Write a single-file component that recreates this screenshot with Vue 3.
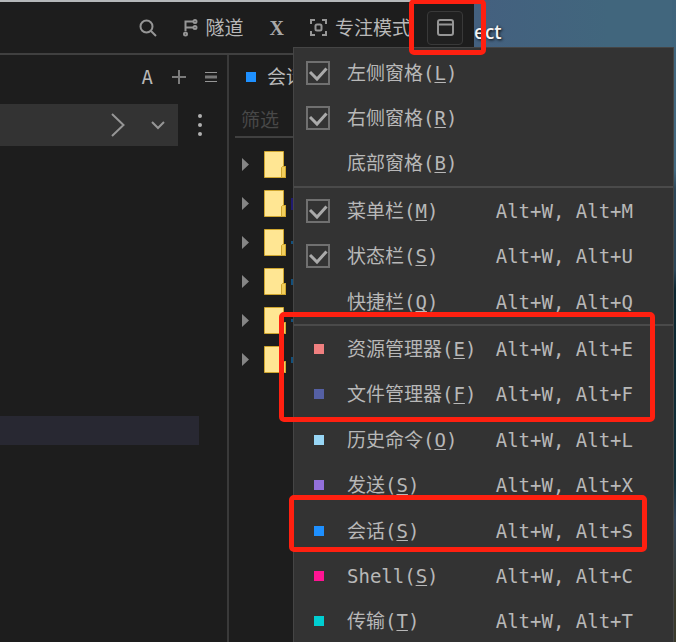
<script setup>
import { ref } from 'vue'

const groups = ref([
  [
    { label: '左侧窗格', key: 'L', checked: true },
    { label: '右侧窗格', key: 'R', checked: true },
    { label: '底部窗格', key: 'B' },
  ],
  [
    { label: '菜单栏', key: 'M', checked: true, shortcut: 'Alt+W, Alt+M' },
    { label: '状态栏', key: 'S', checked: true, shortcut: 'Alt+W, Alt+U' },
    { label: '快捷栏', key: 'Q', shortcut: 'Alt+W, Alt+Q' },
  ],
  [
    { label: '资源管理器', key: 'E', tone: 'coral', shortcut: 'Alt+W, Alt+E' },
    { label: '文件管理器', key: 'F', tone: 'indigo', shortcut: 'Alt+W, Alt+F' },
    { label: '历史命令', key: 'O', tone: 'sky', shortcut: 'Alt+W, Alt+L' },
    { label: '发送', key: 'S', tone: 'purple', shortcut: 'Alt+W, Alt+X' },
    { label: '会话', key: 'S', tone: 'blue', shortcut: 'Alt+W, Alt+S' },
    { label: 'Shell', key: 'S', tone: 'pink', shortcut: 'Alt+W, Alt+C' },
    { label: '传输', key: 'T', tone: 'teal', shortcut: 'Alt+W, Alt+T' },
  ],
])
const filter = ref('')
const command = ref('')
</script>

<template>
  <div class="desktop">
    <div class="window">
      <header class="toolbar">
        <button class="tool" aria-label="搜索">
          <svg width="18" height="18" viewBox="0 0 18 18"><circle cx="7.5" cy="7.5" r="6" /><path d="M12 12l5 5" /></svg>
        </button>
        <button class="tool">
          <svg width="15" height="18" viewBox="0 0 15 18"><path d="M2.5 12V2.5H11M2.5 8.500H11" /><circle cx="2.500" cy="15" r="1.500" /><circle cx="12" cy="2.500" r="1.500" /><circle cx="12" cy="8.500" r="1.500" /></svg>
          隧道
        </button>
        <button class="tool x-tool">X</button>
        <button class="tool">
          <svg width="17" height="17" viewBox="0 0 17 17"><path d="M1 5V1h4M12 1h4v4M16 12v4h-4M5 16H1v-4" /><rect x="5.500" y="5.500" width="6" height="6" rx="1.500" /></svg>
          专注模式
        </button>
        <button class="tool layout" aria-label="布局" aria-expanded="true">
          <svg width="17" height="17" viewBox="0 0 17 17"><rect x="1" y="1" width="15" height="15" rx="2" /><path d="M1 5.500h15" /></svg>
        </button>
      </header>

      <main class="panes">
        <section class="left">
          <div class="pane-head">
            <button class="tool">A</button>
            <button class="tool" aria-label="新建">
              <svg class="dim" width="14" height="14" viewBox="0 0 14 14"><path d="M7 0v14M0 7h14" /></svg>
            </button>
            <button class="tool" aria-label="菜单">
              <svg width="12" height="12" viewBox="0 0 12 12"><path class="thin" d="M0 1.500h12M0 10.500h12" /><path class="thick" d="M0 6h12" /></svg>
            </button>
          </div>
          <div class="command">
            <div class="command-box">
              <input v-model="command" aria-label="命令">
              <button class="tool" aria-label="执行">
                <svg width="14" height="24" viewBox="0 0 14 24"><path d="M1 1l11.500 11L1 23" /></svg>
              </button>
              <button class="tool" aria-label="展开">
                <svg width="14" height="9" viewBox="0 0 14 9"><path d="M1 1l6 6 6-6" /></svg>
              </button>
            </div>
            <button class="tool" aria-label="更多">
              <svg class="dots" width="4" height="24" viewBox="0 0 4 24"><circle cx="2" cy="3" r="2" /><circle cx="2" cy="12" r="2" /><circle cx="2" cy="21" r="2" /></svg>
            </button>
          </div>
          <div class="selection"></div>
        </section>

        <section class="right">
          <div class="session-head"><i class="swatch blue"></i>会话</div>
          <input v-model="filter" class="filter" placeholder="筛选" aria-label="筛选">
          <ul class="tree">
            <li v-for="n in 6" :key="n">
              <svg class="arrow" width="7" height="13" viewBox="0 0 7 13"><path d="M0 0l7 6.500L0 13z" /></svg>
              <svg class="folder" width="22" height="27" viewBox="0 0 22 27">
                <path d="M.5.5h19v15h2v11H.5z" /><path class="fold" d="M17.500 26.500v-10l1-1h3v11z" />
              </svg>
              <i class="mark" :class="'mark-' + n"></i>
            </li>
          </ul>
        </section>
      </main>
    </div>

    <span class="desktop-label">ect</span>

    <div class="menu" role="menu">
      <template v-for="(group, g) in groups" :key="g">
        <hr v-if="g">
        <template v-for="item in group" :key="item.label">
          <label v-if="item.checked !== undefined" class="row">
            <span class="box">
              <input v-model="item.checked" type="checkbox">
              <svg v-if="item.checked" width="24" height="24" viewBox="0 0 24 24"><path d="M4 11l7 7 9.500-10.500" /></svg>
            </span>
            <span class="name">{{ item.label }}(<u>{{ item.key }}</u>)</span>
            <span>{{ item.shortcut }}</span>
          </label>
          <button v-else class="row" role="menuitem">
            <span class="slot"><i v-if="item.tone" class="swatch" :class="item.tone"></i></span>
            <span class="name">{{ item.label }}(<u>{{ item.key }}</u>)</span>
            <span>{{ item.shortcut }}</span>
          </button>
        </template>
      </template>
    </div>

    <div class="outline outline-button"></div>
    <div class="outline outline-managers"></div>
    <div class="outline outline-session"></div>
  </div>
</template>

<style>
body {
  margin: 0;
}
</style>

<style scoped>
* {
  box-sizing: border-box;
}
.desktop {
  position: relative;
  min-height: 100vh;
  overflow: hidden;
  display: flex;
  color: #b8b8b8;
  font: 19px/24px "DejaVu Sans Mono", "Noto Sans CJK SC", monospace;
  background:
    linear-gradient(#3f647c, #41687f 170px, #2c4658 190px, #2c4658 270px, #0b2630 290px, #12303a 480px, #34465a 520px, #3a3a2c 600px) right / 4px 100% no-repeat,
    linear-gradient(90deg, #44607f 70%, #41667d 90%);
}
button,
input {
  margin: 0;
  padding: 0;
  border: 0;
  background: none;
  color: inherit;
  font: inherit;
  outline: 0;
}
svg {
  display: block;
  flex: none;
  fill: none;
  stroke: #969696;
  stroke-width: 2;
}
.window {
  flex: 0 0 474px;
  display: flex;
  flex-direction: column;
  background: #1d1d1d;
  border-top: 2px solid #b5b8ba;
}
.toolbar {
  height: 53px;
  display: flex;
  align-items: center;
  justify-content: flex-end;
  gap: 26px;
  padding: 0 11px 0 0;
  border-bottom: 2px solid #404040;
}
.tool {
  display: flex;
  align-items: center;
  gap: 8px;
  white-space: nowrap;
}
.x-tool {
  font-family: "Liberation Serif", serif;
  font-size: 20px;
  font-weight: bold;
  color: #a8a8a8;
}
.layout {
  width: 36px;
  height: 34px;
  justify-content: center;
  margin-left: -10px;
  border: 1px solid #393939;
  border-radius: 4px;
  background: #202020;
}
.panes {
  flex: 1;
  display: flex;
}
.left {
  flex: 0 0 229px;
  border-right: 2px solid #3a3a3a;
}
.pane-head {
  height: 44px;
  display: flex;
  align-items: center;
  justify-content: flex-end;
  gap: 19px;
  padding-right: 10px;
}
.dim {
  stroke: #7c7c7c;
}
.thin {
  stroke-width: 1;
}
.thick {
  stroke: #777;
  stroke-width: 3;
}
.command {
  display: flex;
  align-items: center;
  justify-content: space-between;
  padding: 5px 25px 0 0;
}
.command-box {
  width: 178px;
  height: 42px;
  display: flex;
  align-items: center;
  gap: 26px;
  padding-right: 13px;
  background: #333;
}
.command-box input {
  flex: 1;
  min-width: 0;
}
.dots {
  fill: #b0b0b0;
  stroke: none;
}
.selection {
  width: 199px;
  height: 29px;
  margin-top: 270px;
  background: #282832;
}
.right {
  flex: 1;
  padding-left: 6px;
}
.session-head {
  height: 44px;
  display: flex;
  align-items: center;
  gap: 11px;
  padding-left: 11px;
}
.swatch {
  display: block;
  width: 10px;
  height: 10px;
}
.coral { background: #f08080; }
.indigo { background: #5560a4; }
.sky { background: #98d6f5; }
.purple { background: #9370db; }
.blue { background: #1e90ff; }
.pink { background: #ff1493; }
.teal { background: #00ced1; }
.filter {
  display: block;
  width: 100%;
  height: 39px;
  padding: 4px 6px 0;
  border-bottom: 2px solid #404040;
}
.filter::placeholder {
  color: #484848;
  opacity: 1;
}
.tree {
  margin: 0;
  padding: 7px 0 0 7px;
  list-style: none;
}
.tree li {
  height: 39px;
  display: flex;
  align-items: center;
}
.arrow {
  fill: #858585;
  stroke: none;
  margin-right: 15px;
}
.folder {
  fill: #ffe693;
  stroke: #cfa62f;
  stroke-width: 1;
}
.fold {
  fill: #f3cf5c;
}
.mark {
  width: 2px;
  height: 6px;
  margin-left: 5px;
  background: #12507c;
}
.mark-1 { background: none; }
.mark-2 { height: 12px; background: #201a70; }
.mark-3,
.mark-5 { height: 3px; }
.desktop-label {
  padding-top: 20px;
  color: #f4f4f4;
  font-family: "Noto Sans", sans-serif;
  font-weight: 500;
  text-shadow: 1px 1px 3px #000;
}
.menu {
  position: absolute;
  top: 47px;
  right: 2px;
  bottom: -3px;
  left: 293px;
  display: flex;
  flex-direction: column;
  padding-top: 2px;
  background: #333;
  border: 1px solid #454545;
}
.menu hr {
  flex: none;
  width: 100%;
  height: 2px;
  margin: 0;
  border: 0;
  background: #4a4a4a;
}
.row {
  flex: 1;
  display: flex;
  align-items: center;
  padding: 0 40px 0 12px;
  text-align: left;
  white-space: pre;
}
.name {
  flex: 1;
  padding-left: 17px;
}
.name u {
  text-underline-offset: 2px;
  text-decoration-thickness: 1px;
  text-decoration-skip-ink: none;
}
.box,
.slot {
  width: 24px;
  height: 24px;
  display: grid;
  place-items: center;
}
.slot {
  padding-left: 2px;
}
.box > * {
  grid-area: 1 / 1;
}
.box input {
  appearance: none;
  width: 24px;
  height: 24px;
  border: 2px solid #707070;
}
.box svg {
  stroke: #aaa;
  stroke-width: 3;
  pointer-events: none;
}
.outline {
  position: absolute;
  border: 5px solid #ff2010;
  border-radius: 5px;
  pointer-events: none;
}
.outline-button {
  left: 409px;
  top: -1px;
  width: 77px;
  height: 56px;
}
.outline-managers {
  left: 279px;
  top: 312px;
  width: 376px;
  height: 110px;
}
.outline-session {
  left: 289px;
  top: 495px;
  width: 358px;
  height: 57px;
}
</style>
